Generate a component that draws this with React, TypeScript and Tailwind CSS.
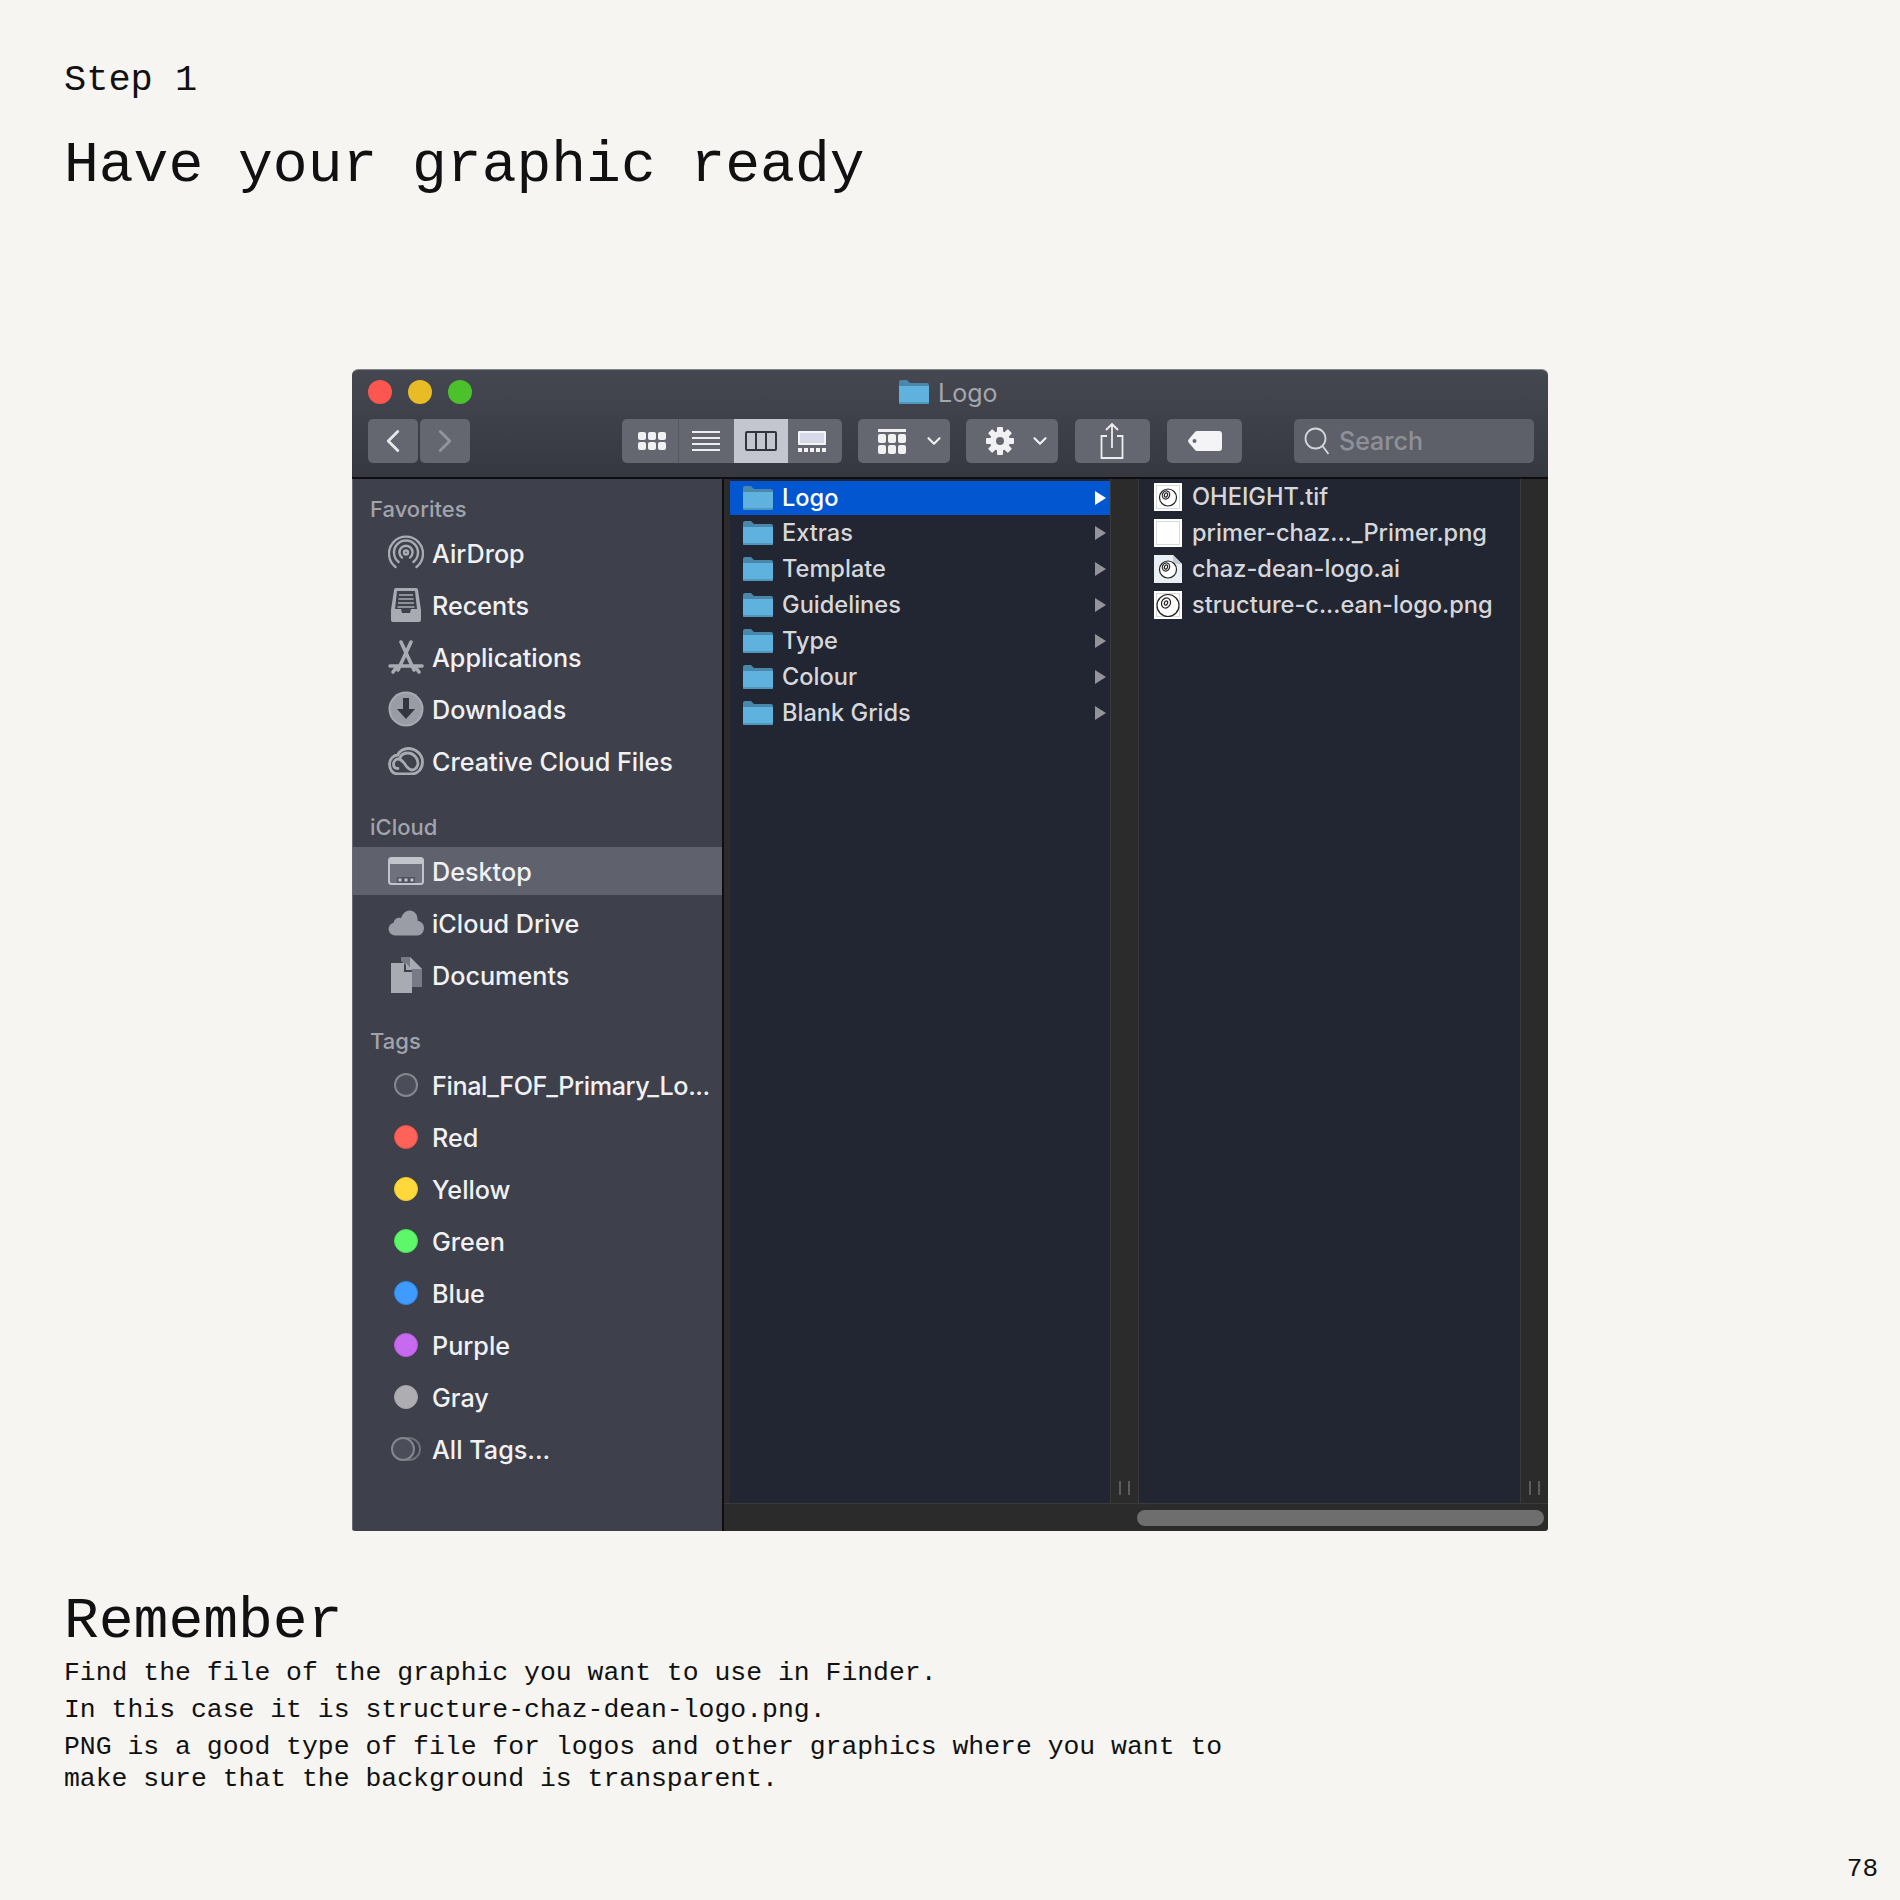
import React from 'react';
import { ChevronLeft, ChevronRight, ChevronDown } from 'lucide-react';

const ICON = '#a9abb3';

// Small blue Finder folder
const Folder: React.FC = () => (
  <svg viewBox="0 0 30 24" className="w-[30px] h-[24px] shrink-0">
    <path d="M0 2a2 2 0 0 1 2-2h6l3 3h17a2 2 0 0 1 2 2v4H0z" fill="#4a87ab" />
    <path d="M0 6h30v16a2 2 0 0 1-2 2H2a2 2 0 0 1-2-2z" fill="#5fb2dd" />
    <path d="M0 22h30v1a1 1 0 0 1-1 1H1a1 1 0 0 1-1-1z" fill="#4f97bd" />
  </svg>
);

// Eight-ball logo thumbnail used for the files
const Ball: React.FC<{ big?: boolean; blank?: boolean; dog?: boolean }> = ({ big, blank, dog }) => (
  <svg viewBox="0 0 28 28" className="w-[28px] h-[28px] shrink-0">
    {dog ? (
      <>
        <path d="M0 0h19l9 9v19H0z" fill="#e8eff5" />
        <path d="M19 0v9h9z" fill="#c4cdd6" />
      </>
    ) : (
      <>
        <rect width="28" height="28" fill="#fff" />
        <rect x="2.500" y="2.500" width="23" height="23" fill="none" stroke="#d2d2d2" strokeWidth="0.8" />
      </>
    )}
    {!blank && (
      <g fill="none" stroke="#222" strokeWidth="1.2">
        <circle cx="14" cy="14.500" r={big ? 11 : 8.500} fill="#fff" />
        <ellipse cx="12" cy="12" rx={big ? 4.400 : 3.600} ry={big ? 5.200 : 4.200} transform="rotate(25 12 12)" />
        <ellipse cx="12" cy="12" rx="1.500" ry="2.200" transform="rotate(25 12 12)" />
      </g>
    )}
  </svg>
);

const AirDropIcon = () => (
  <svg viewBox="0 0 36 36" className="w-[36px] h-[36px]" fill="none" stroke={ICON} strokeWidth="2.4" strokeLinecap="round">
    <path d="M7.500 32A17 17 0 1 1 28.500 32" />
    <path d="M10.600 27A12 12 0 1 1 25.400 27" />
    <path d="M14 22.600A6.600 6.600 0 1 1 22 22.600" />
    <circle cx="18" cy="17.500" r="2" />
  </svg>
);

const RecentsIcon = () => (
  <svg viewBox="0 0 36 36" className="w-[36px] h-[36px]">
    <path d="M8 1h20a2 2 0 0 1 2 2l3 20v10a2 2 0 0 1-2 2H5a2 2 0 0 1-2-2V23L6 3a2 2 0 0 1 2-2z" fill={ICON} />
    <path d="M9 4h18l2 18h-6l-1 4H14l-1-4H7z" fill="#3e404b" />
    <path d="M11 8h14M10.500 12h15M10 16h16M9.500 20h17" stroke={ICON} strokeWidth="1.600" />
  </svg>
);

const AppsIcon = () => (
  <svg viewBox="0 0 36 36" className="w-[36px] h-[36px]" fill="none" stroke={ICON} strokeWidth="3.600" strokeLinecap="round">
    <path d="M13 3l13 28M23 3L10 31M2 27h32" />
    <path d="M5 33l3-4M31 33l-3-4" />
  </svg>
);

const DownloadsIcon = () => (
  <svg viewBox="0 0 36 36" className="w-[36px] h-[36px]">
    <circle cx="18" cy="18" r="17.500" fill={ICON} />
    <circle cx="18" cy="18" r="15.500" fill="#9a9ca5" />
    <path d="M15 7h6v11h6l-9 10-9-10h6z" fill="#34363f" />
  </svg>
);

const CreativeCloudIcon = () => (
  <svg viewBox="0 0 36 28" className="w-[36px] h-[28px]" fill="none" stroke={ICON} strokeWidth="2.800" strokeLinecap="round">
    <path d="M10 27C4 27 1.500 22 1.500 17c0-5 4-9 8.500-9 1-4 6-6.500 10-6.500 7 0 14.500 5 14.500 13.500 0 7-5 12-11 12z" />
    <path d="M10 21.500c-3 0-4.500-2-4.500-4.500s2-5 4.500-5c4 0 6 4 9 8 2 2 3 3 5 3 3 0 6-3 6-7s-4-10-10-10c-4 0-7 2-8 5" />
  </svg>
);

const DesktopIcon = () => (
  <svg viewBox="0 0 36 28" className="w-[36px] h-[28px]">
    <rect x="1" y="1" width="34" height="26" rx="2.500" fill="#6f717c" stroke="#c2c4cc" strokeWidth="2" />
    <rect x="1" y="1" width="34" height="6" rx="2" fill="#c2c4cc" />
    <rect x="9" y="20" width="18" height="6" fill="#505260" />
    <rect x="10.500" y="21.500" width="3" height="3" fill="#c2c4cc" />
    <rect x="16.500" y="21.500" width="3" height="3" fill="#c2c4cc" />
    <rect x="22.500" y="21.500" width="3" height="3" fill="#c2c4cc" />
  </svg>
);

const CloudIcon = () => (
  <svg viewBox="0 0 36 26" className="w-[36px] h-[26px]">
    <path d="M7 25.500a6.500 6.500 0 0 1-1.500-12.800C6.500 8.500 10 7 13 8.200 14.500 3.500 18 .5 21.500.5c4.500 0 8 3.500 8 8.500v1.500c3.500.8 6.500 3.500 6.500 7.500s-3 7.500-6.500 7.500z" fill="#9a9ca6" />
  </svg>
);

const DocumentsIcon = () => (
  <svg viewBox="0 0 34 36" className="w-[34px] h-[36px]">
    <path d="M12 0h9l12 12v18H23V14L12 4z" fill="#787a85" />
    <path d="M21 0l12 12H21z" fill="#a9abb3" />
    <path d="M2 6h13v9h8v21H2z" fill="#a9abb3" />
    <path d="M17 6l6 7h-6z" fill="#a9abb3" />
  </svg>
);

const GearIcon = () => (
  <svg viewBox="0 0 28 28" className="w-[28px] h-[28px]">
    <g fill="#f1f1f3">
      {[0, 45, 90, 135, 180, 225, 270, 315].map((a) => (
        <rect key={a} x="11" y="0" width="6" height="7" rx="1" transform={`rotate(${a} 14 14)`} />
      ))}
      <circle cx="14" cy="14" r="10" />
    </g>
    <circle cx="14" cy="14" r="4" fill="#656770" />
  </svg>
);

const Tag: React.FC<{ color: string }> = ({ color }) => (
  <span className={`w-[24px] h-[24px] rounded-full border ${color}`} />
);

const SidebarRow: React.FC<{ icon: React.ReactNode; label: string; active?: boolean; tight?: boolean }> = ({ icon, label, active, tight }) => (
  <div className={`flex items-center text-[#f1f1f3] text-[25.2px] font-medium ${active ? 'h-[48px] my-[2px] bg-[#5f616d]' : 'h-[52px]'}`}>
    <div className="w-[36px] ml-[35px] mr-[8px] flex justify-center items-center">{icon}</div>
    <span className={`pt-[4px] whitespace-nowrap ${tight ? 'tracking-[-0.4px]' : ''}`}>{label}</span>
  </div>
);

const SectionLabel: React.FC<{ label: string }> = ({ label }) => (
  <div className="h-[38px] pl-[17px] pt-[2px] flex items-center text-[22px] font-medium text-[#a2a4ab]">{label}</div>
);

const favorites = [
  { label: 'AirDrop', icon: <AirDropIcon /> },
  { label: 'Recents', icon: <RecentsIcon /> },
  { label: 'Applications', icon: <AppsIcon /> },
  { label: 'Downloads', icon: <DownloadsIcon /> },
  { label: 'Creative Cloud Files', icon: <CreativeCloudIcon /> },
];

const tags = [
  { label: 'Final_FOF_Primary_Lo...', color: 'bg-[#4b4d58] border-[#85878e] border-2' },
  { label: 'Red', color: 'bg-[#ff6258] border-[#e84f47]' },
  { label: 'Yellow', color: 'bg-[#ffd93b] border-[#f2cb2a]' },
  { label: 'Green', color: 'bg-[#5ef76a] border-[#46e254]' },
  { label: 'Blue', color: 'bg-[#3f9bff] border-[#2a87ee]' },
  { label: 'Purple', color: 'bg-[#c76af0] border-[#b95ae4]' },
  { label: 'Gray', color: 'bg-[#adadb2] border-[#a3a3a8]' },
];

const folders = ['Logo', 'Extras', 'Template', 'Guidelines', 'Type', 'Colour', 'Blank Grids'];

const files = [
  { name: 'OHEIGHT.tif', thumb: <Ball /> },
  { name: 'primer-chaz..._Primer.png', thumb: <Ball blank /> },
  { name: 'chaz-dean-logo.ai', thumb: <Ball dog /> },
  { name: 'structure-c...ean-logo.png', thumb: <Ball big /> },
];

// Column resize grip at the foot of a Finder column
const Grip = () => (
  <div className="flex-1 flex justify-center items-end gap-[7px] pb-[8px]">
    <span className="w-[2px] h-[14px] bg-[#5c5c5c]" />
    <span className="w-[2px] h-[14px] bg-[#5c5c5c]" />
  </div>
);

const btn = 'h-[44px] rounded-[5px] bg-[#656770] flex items-center justify-center';

const Finder = () => (
  <div className="w-[1196px] h-[1162px] ml-[352px] rounded-t-[6px] rounded-b-[3px] overflow-hidden flex flex-col font-['Inter',sans-serif] border-t border-[#85868b]">
    {/* Title bar and toolbar */}
    <div className="h-[109px] shrink-0 bg-gradient-to-b from-[#454851] to-[#363841] border-b-2 border-[#0e0e10] pl-[16px] pr-[13px] flex flex-col">
      <div className="relative h-[49px] flex items-center gap-[16px] pb-[5px]">
        <span className="w-[24px] h-[24px] rounded-full bg-[#fc5650]" />
        <span className="w-[24px] h-[24px] rounded-full bg-[#e8bc25]" />
        <span className="w-[24px] h-[24px] rounded-full bg-[#4bc22c]" />
        <div className="absolute left-[531px] top-[9px] flex items-center gap-[9px]">
          <Folder />
          <span className="text-[25px] leading-[24px] pt-[2px] text-[#a4a6ad]">Logo</span>
        </div>
      </div>
      <div className="flex items-center h-[44px]">
        <div className={`${btn} w-[50px] mr-[2px]`}>
          <ChevronLeft size={38} strokeWidth={1.8} className="text-[#e6e7ea]" />
        </div>
        <div className={`${btn} w-[50px] mr-[152px]`}>
          <ChevronRight size={38} strokeWidth={1.8} className="text-[#92949b]" />
        </div>

        {/* View switcher */}
        <div className="flex w-[220px] h-[44px] rounded-[5px] overflow-hidden bg-[#656770] mr-[16px]">
          <div className="w-[57px] border-r border-[#55575f] flex items-center justify-center pl-[3px]">
            <div className="grid grid-cols-3 gap-[2px]">
              {[0, 1, 2, 3, 4, 5].map((i) => (
                <span key={i} className="w-[8px] h-[8px] rounded-[2px] bg-[#f1f1f3]" />
              ))}
            </div>
          </div>
          <div className="w-[55px] flex flex-col gap-[4px] items-center justify-center pr-[2px]">
            {[0, 1, 2, 3].map((i) => (
              <span key={i} className="w-[28px] h-[2px] bg-[#eeeef0]" />
            ))}
          </div>
          <div className="w-[54px] bg-[#c3c5cf] flex items-center justify-center pr-[1px]">
            <div className="w-[32px] h-[20px] border-2 border-[#33353d] rounded-[2px] flex justify-evenly">
              <span className="w-[2px] bg-[#33353d]" />
              <span className="w-[2px] bg-[#33353d]" />
            </div>
          </div>
          <div className="flex-1 flex flex-col items-center justify-center gap-[3px] pr-[6px]">
            <div className="w-[28px] h-[14px] bg-[#d8d9e8] border-2 border-[#f4f4f6] rounded-[1px]" />
            <div className="flex gap-[2px]">
              {[0, 1, 2, 3, 4].map((i) => (
                <span key={i} className="w-[4px] h-[4px] bg-[#f1f1f3]" />
              ))}
            </div>
          </div>
        </div>

        {/* Group by */}
        <div className={`${btn} w-[92px] mr-[16px] gap-[17px] pl-[14px]`}>
          <div className="flex flex-col gap-[2px]">
            <span className="w-[28px] h-[3px] bg-[#f1f1f3]" />
            <div className="grid grid-cols-3 gap-[2px]">
              {[0, 1, 2, 3, 4, 5].map((i) => (
                <span key={i} className="w-[8px] h-[9px] rounded-[2px] bg-[#f1f1f3]" />
              ))}
            </div>
          </div>
          <ChevronDown size={22} strokeWidth={2.4} className="text-[#eeeef0]" />
        </div>

        {/* Action */}
        <div className={`${btn} w-[92px] mr-[17px] gap-[15px] pl-[13px]`}>
          <GearIcon />
          <ChevronDown size={22} strokeWidth={2.4} className="text-[#eeeef0]" />
        </div>

        {/* Share */}
        <div className={`${btn} w-[75px] mr-[17px]`}>
          <svg viewBox="0 0 24 38" className="w-[24px] h-[38px] -translate-x-[1px]" fill="none" stroke="#eeeef0" strokeWidth="1.8">
            <path d="M7 14H1.500v22h21V14H17" />
            <path d="M12 26V2M6 8l6-6 6 6" />
          </svg>
        </div>

        {/* Tag */}
        <div className={`${btn} w-[75px] mr-[52px]`}>
          <svg viewBox="0 0 34 20" className="w-[34px] h-[20px]">
            <path d="M9 0h22a3 3 0 0 1 3 3v14a3 3 0 0 1-3 3H9a3 3 0 0 1-2-1L1 12a3 3 0 0 1 0-4l6-7a3 3 0 0 1 2-1z" fill="#f4f4f6" />
            <circle cx="6.500" cy="10" r="2" fill="#656770" />
          </svg>
        </div>

        {/* Search */}
        <div className="w-[240px] h-[44px] rounded-[5px] bg-[#5e6069] flex items-center pl-[10px] gap-[9px]">
          <svg viewBox="0 0 26 28" className="w-[26px] h-[28px]" fill="none" stroke="#d5d6da" strokeWidth="1.8">
            <circle cx="11.500" cy="11.500" r="10" />
            <path d="M18.500 19l6 8" />
          </svg>
          <span className="text-[25px] font-medium pt-[2px] text-[#8f9198]">Search</span>
        </div>
      </div>
    </div>

    <div className="flex-1 flex min-h-0">
      {/* Sidebar */}
      <div className="w-[370px] shrink-0 bg-[#3e404b] border-l border-[#6a6b72] pt-[10px]">
        <SectionLabel label="Favorites" />
        {favorites.map((f) => (
          <SidebarRow key={f.label} label={f.label} icon={f.icon} />
        ))}
        <div className="mt-[20px]">
          <SectionLabel label="iCloud" />
          <SidebarRow active label="Desktop" icon={<DesktopIcon />} />
          <SidebarRow label="iCloud Drive" icon={<CloudIcon />} />
          <SidebarRow label="Documents" icon={<DocumentsIcon />} />
        </div>
        <div className="mt-[20px]">
          <SectionLabel label="Tags" />
          {tags.map((t, i) => (
            <SidebarRow key={t.label} label={t.label} tight={i === 0} icon={<Tag color={t.color} />} />
          ))}
          <SidebarRow
            label="All Tags..."
            icon={
              <span className="relative w-[30px] h-[24px]">
                <span className="absolute left-[6px] top-0 w-[24px] h-[24px] rounded-full border-2 border-[#6f7178]" />
                <span className="absolute left-0 top-0 w-[24px] h-[24px] rounded-full border-2 border-[#85878e] bg-[#4b4d58]" />
              </span>
            }
          />
        </div>
      </div>

      {/* Column browser */}
      <div className="flex-1 flex flex-col bg-[#2b2b2b] border-l-2 border-[#0e0e10]">
        <div className="flex-1 flex pl-[6px] min-h-0">
          <div className="w-[381px] bg-[#222632] border-r border-[#3a3a3a] pt-[2px]">
            {folders.map((name, i) => (
              <div
                key={name}
                className={`flex items-center pl-[13px] pr-[4px] text-[23.6px] ${i === 0 ? 'h-[34px] bg-[#0257d1] text-white' : 'h-[36px] text-[#d6d7db]'}`}
              >
                <Folder />
                <span className="ml-[9px] flex-1 font-medium">{name}</span>
                <span className={`w-0 h-0 border-y-[7px] border-y-transparent border-l-[11px] ${i === 0 ? 'border-l-white' : 'border-l-[#92949a]'}`} />
              </div>
            ))}
          </div>
          <div className="w-[27px] flex"><Grip /></div>
          <div className="w-[383px] bg-[#222632] border-x border-[#3a3a3a]">
            {files.map((f) => (
              <div key={f.name} className="h-[36px] flex items-center pl-[15px] gap-[10px] text-[23.6px] font-medium text-[#d6d7db]">
                {f.thumb}
                <span>{f.name}</span>
              </div>
            ))}
          </div>
          <div className="flex-1 flex"><Grip /></div>
        </div>
        <div className="h-[28px] shrink-0 border-t border-[#3a3a3a] flex items-center justify-end pr-[4px]">
          <div className="w-[407px] h-[16px] rounded-full bg-[#6e6e6e]" />
        </div>
      </div>
    </div>
  </div>
);

export default function App() {
  return (
    <div className="w-[1900px] h-[1900px] bg-[#f6f5f1] text-[#111] font-['Liberation_Mono',monospace] flex flex-col">
      <div className="pl-[64px] pt-[57px] h-[369px] shrink-0">
        <p className="text-[37px] leading-[46px]">Step 1</p>
        <h1 className="text-[58px] leading-[70px] mt-[28px]">Have your graphic ready</h1>
      </div>

      <Finder />

      <div className="pl-[64px] pt-[58px]">
        <h2 className="text-[58px] leading-[66px]">Remember</h2>
        <div className="text-[26.45px] leading-[33px] mt-[2px]">
          <p className="h-[37px]">Find the file of the graphic you want to use in Finder.</p>
          <p className="h-[37px]">In this case it is structure-chaz-dean-logo.png.</p>
          <p className="h-[32px]">PNG is a good type of file for logos and other graphics where you want to</p>
          <p>make sure that the background is transparent.</p>
        </div>
      </div>

      <div className="mt-auto pr-[22px] pb-[15px] text-right text-[26px] leading-[32px]">78</div>
    </div>
  );
}
